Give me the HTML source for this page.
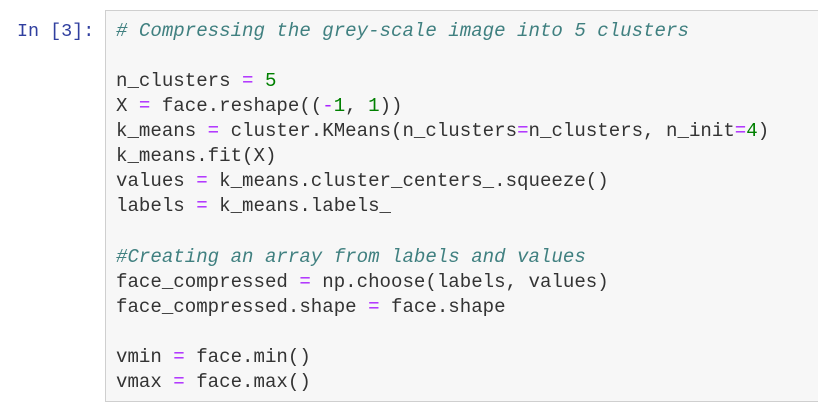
<!DOCTYPE html>
<html><head><style>
body{margin:0;background:#fff;width:818px;height:415px;overflow:hidden;position:relative;font-family:"Liberation Mono",monospace;}
.p{position:absolute;left:17px;top:19px;font-size:18.4px;color:#303f9f;line-height:25px;}
.box{position:absolute;left:105px;top:10px;width:730px;height:390px;background:#f7f7f7;border:1px solid #cfcfcf;}
pre{margin:0;position:absolute;left:10px;top:8px;font-family:"Liberation Mono",monospace;font-size:19.1px;line-height:25.07px;color:#333;}
.c{color:#408080;font-style:italic}.o{color:#aa22ff}.n{color:#008000}
</style></head><body>
<div class="p">In [3]:</div>
<div class="box"><pre><span class="c"># Compressing the grey-scale image into 5 clusters</span>

n_clusters <span class="o">=</span> <span class="n">5</span>
X <span class="o">=</span> face.reshape((<span class="o">-</span><span class="n">1</span>, <span class="n">1</span>))
k_means <span class="o">=</span> cluster.KMeans(n_clusters<span class="o">=</span>n_clusters, n_init<span class="o">=</span><span class="n">4</span>)
k_means.fit(X)
values <span class="o">=</span> k_means.cluster_centers_.squeeze()
labels <span class="o">=</span> k_means.labels_

<span class="c">#Creating an array from labels and values</span>
face_compressed <span class="o">=</span> np.choose(labels, values)
face_compressed.shape <span class="o">=</span> face.shape

vmin <span class="o">=</span> face.min()
vmax <span class="o">=</span> face.max()</pre></div>
</body></html>
